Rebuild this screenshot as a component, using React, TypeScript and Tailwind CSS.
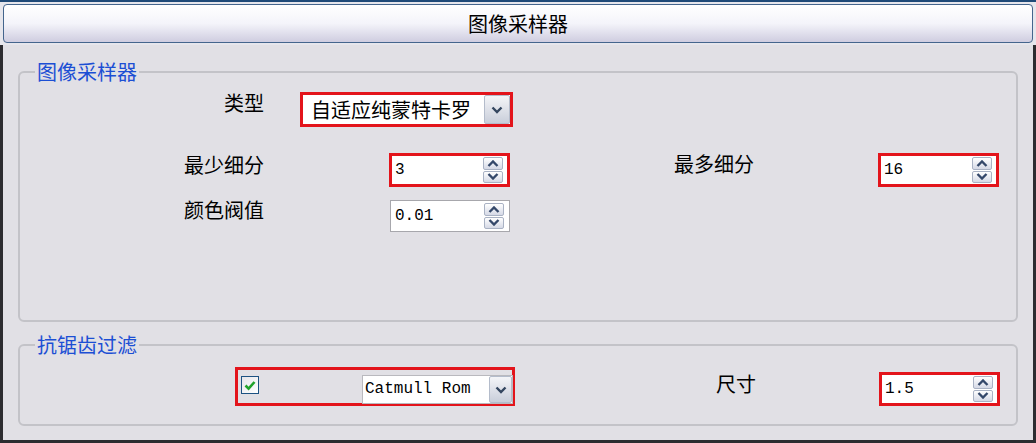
import React from "react";

const CJK = "font-['Noto_Sans_CJK_SC','Noto_Sans',sans-serif]";
const MONO = "font-['Liberation_Mono','DejaVu_Sans_Mono',monospace]";
const RED = "border-[#e3141b]";

function Chevron({ up = false }: { up?: boolean }) {
  return (
    <svg width="12" height="7" viewBox="0 0 12 7" aria-hidden="true">
      <path
        d={up ? "M1.5 6 L6 1.5 L10.5 6" : "M1.5 1 L6 5.5 L10.5 1"}
        fill="none"
        stroke="#34486a"
        strokeWidth="2.4"
      />
    </svg>
  );
}

function SpinArrows() {
  return (
    <div className="flex h-[26px] w-[20px] flex-col gap-px">
      <div className="flex flex-1 items-center justify-center rounded-[2px] border border-[#a9b2c4] bg-gradient-to-b from-white to-[#d5d9e6]">
        <Chevron up />
      </div>
      <div className="flex flex-1 items-center justify-center rounded-[2px] border border-[#a9b2c4] bg-gradient-to-b from-white to-[#d5d9e6]">
        <Chevron />
      </div>
    </div>
  );
}

function SpinBox({ value, highlight = false }: { value: string; highlight?: boolean }) {
  return (
    <div
      className={`flex items-center justify-between bg-white ${
        highlight
          ? `h-[34px] w-[121px] border-[3px] ${RED} pl-[3px] pr-[4px]`
          : "h-[32px] w-[120px] border border-[#a7a7ac] pl-[4px] pr-[5px]"
      }`}
    >
      <span className={`${MONO} text-[16px] leading-none text-black`}>{value}</span>
      <SpinArrows />
    </div>
  );
}

function DropButton({ className = "" }: { className?: string }) {
  return (
    <div
      className={`flex items-center justify-center rounded-[2px] border border-[#b4bccb] bg-gradient-to-b from-[#f4f5f8] to-[#c9ceda] ${className}`}
    >
      <svg width="12" height="8" viewBox="0 0 12 8" aria-hidden="true">
        <path d="M1.5 1.5 L6 6 L10.5 1.5" fill="none" stroke="#34465f" strokeWidth="2.4" />
      </svg>
    </div>
  );
}

function Label({ children, className = "" }: { children: React.ReactNode; className?: string }) {
  return <div className={`${CJK} text-[20px] leading-[20px] text-black ${className}`}>{children}</div>;
}

function Group({
  title,
  className = "",
  children,
}: {
  title: string;
  className?: string;
  children: React.ReactNode;
}) {
  return (
    <fieldset
      className={`ml-[15px] w-[1000px] rounded-[6px] border-2 border-[#c3c3c8] ${className}`}
    >
      <legend className={`${CJK} ml-[15px] px-[2px] text-[20px] leading-[20px] text-[#1c4fd4]`}>
        {title}
      </legend>
      {children}
    </fieldset>
  );
}

export default function App() {
  return (
    <div className="h-[443px] w-[1036px] overflow-hidden bg-[#e6e6ec]">
      {/* title bar */}
      <div className="h-[2px] bg-[#1f4a78]" />
      <div className="px-[3px] pt-[2px]">
        <div className="flex h-[39px] items-center justify-center rounded-[4px] border-[1.5px] border-[#44658d] bg-gradient-to-b from-white via-[#f4f4fa] to-[#cfcde0]">
          <span className={`${CJK} text-[20px] leading-none text-black`}>图像采样器</span>
        </div>
      </div>

      {/* body */}
      <div className="mt-[2px] h-[398px] border-x-[3px] border-b-[3px] border-[#2c2c30] bg-[#e1e0e5] pt-[17px]">
        <Group title="图像采样器" className="h-[260px]">
          <div className="pt-[10px]">
            <div className="flex items-start">
              <Label className="mt-[1px] w-[244px] text-right">类型</Label>
              <div
                className={`ml-[36px] flex h-[35px] w-[213px] items-center justify-between border-[3px] ${RED} bg-white`}
              >
                <span className={`${CJK} pl-[8px] text-[20px] leading-none text-black`}>
                  自适应纯蒙特卡罗
                </span>
                <DropButton className="h-full w-[26px]" />
              </div>
            </div>

            <div className="mt-[26px] flex items-start">
              <Label className="mt-[2px] w-[244px] text-right">最少细分</Label>
              <div className="ml-[125px]">
                <SpinBox value="3" highlight />
              </div>
              <Label className="ml-[164px] mt-[1px] w-[80px]">最多细分</Label>
              <div className="ml-[124px]">
                <SpinBox value="16" highlight />
              </div>
            </div>

            <div className="mt-[13px] flex items-start">
              <Label className="w-[244px] text-right">颜色阀值</Label>
              <div className="ml-[126px]">
                <SpinBox value="0.01" />
              </div>
            </div>
          </div>
        </Group>

        <Group title="抗锯齿过滤" className="mt-[13px] h-[91px]">
          <div className="flex items-start pt-[12px]">
            <div
              className={`ml-[215px] flex h-[39px] w-[280px] items-start justify-between border-[3px] ${RED}`}
            >
              <div className="ml-[3px] mt-[6px] flex h-[18px] w-[18px] items-center justify-center border border-[#1d5282] bg-gradient-to-br from-[#e6e6ea] to-white">
                <svg width="12" height="11" viewBox="0 0 12 11" aria-hidden="true">
                  <path d="M1.5 5.5 L4.6 8.6 L10.5 2" fill="none" stroke="#21a32b" strokeWidth="2.6" />
                </svg>
              </div>
              <div className="mr-[-1px] mt-[5px] flex h-[29px] w-[151px] border border-[#b9b9be] bg-white">
                <span className={`${MONO} flex-1 pl-[2px] pt-[5px] text-[16px] leading-none text-black`}>
                  Catmull Rom
                </span>
                <DropButton className="h-full w-[23px]" />
              </div>
            </div>
            <Label className="ml-[201px] mt-[7px] w-[40px]">尺寸</Label>
            <div className="ml-[123px] mt-[5px]">
              <SpinBox value="1.5" highlight />
            </div>
          </div>
        </Group>
      </div>
    </div>
  );
}
